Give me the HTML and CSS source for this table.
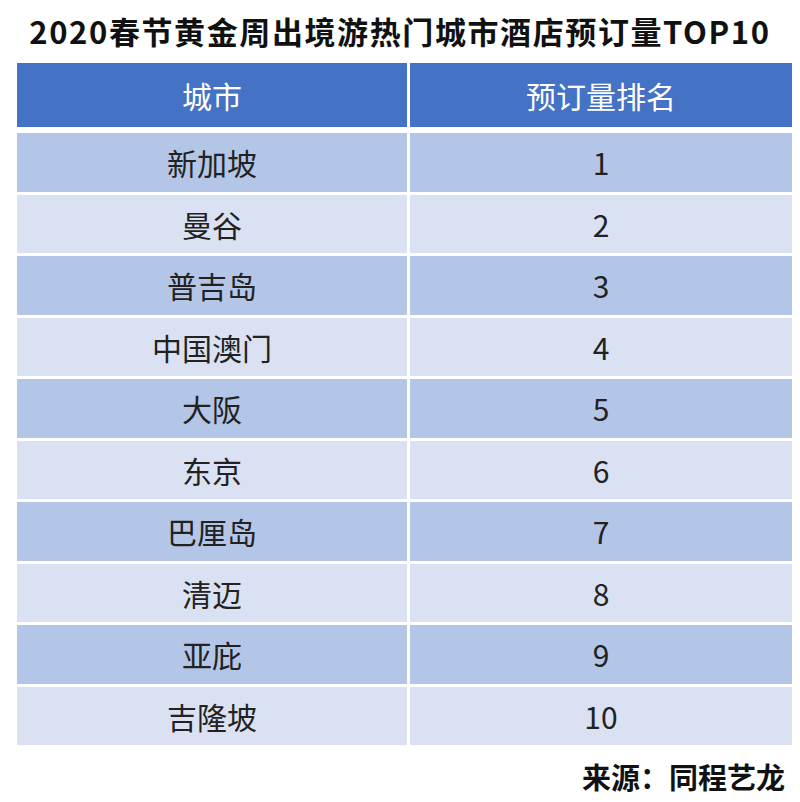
FILE: index.html
```html
<!DOCTYPE html>
<html lang="zh-CN">
<head>
<meta charset="utf-8">
<title>2020春节黄金周出境游热门城市酒店预订量TOP10</title>
<link rel="stylesheet" href="styles.css">
</head>
<body>
<div class="page">
  <h1 class="title">2020春节黄金周出境游热门城市酒店预订量TOP10</h1>
  <div class="table">
    <div class="cell head">城市</div>
    <div class="cell head">预订量排名</div>
    <div class="cell odd">新加坡</div><div class="cell odd">1</div>
    <div class="cell even">曼谷</div><div class="cell even">2</div>
    <div class="cell odd">普吉岛</div><div class="cell odd">3</div>
    <div class="cell even">中国澳门</div><div class="cell even">4</div>
    <div class="cell odd">大阪</div><div class="cell odd">5</div>
    <div class="cell even">东京</div><div class="cell even">6</div>
    <div class="cell odd">巴厘岛</div><div class="cell odd">7</div>
    <div class="cell even">清迈</div><div class="cell even">8</div>
    <div class="cell odd">亚庇</div><div class="cell odd">9</div>
    <div class="cell even">吉隆坡</div><div class="cell even">10</div>
  </div>
  <div class="source">来源：同程艺龙</div>
</div>
</body>
</html>
```
FILE: styles.css
```css
html, body {
  margin: 0;
  padding: 0;
  background: #ffffff;
}
.page {
  width: 800px;
  height: 802px;
  display: flex;
  flex-direction: column;
  font-family: "Noto Sans CJK SC", "Noto Sans", sans-serif;
  color: #222222;
}
.title {
  margin: 0;
  height: 63px;
  display: flex;
  align-items: center;
  justify-content: center;
  font-size: 31px;
  font-weight: 700;
  letter-spacing: 1.6px;
  color: #111111;
  padding-bottom: 2px;
  box-sizing: border-box;
}
.table {
  margin-left: 17px;
  width: 775px;
  display: grid;
  grid-template-columns: 390px 382px;
  grid-template-rows: 67px repeat(10, 58.5px);
  column-gap: 3px;
  row-gap: 3px;
}
.cell {
  display: flex;
  align-items: center;
  justify-content: center;
  font-size: 30px;
  line-height: 1;
}
.head {
  align-self: start;
  height: 64px;
  background: #4472c4;
  color: #ffffff;
}
.odd {
  background: #b4c6e7;
}
.even {
  background: #d9e1f2;
}
.source {
  margin-top: 10px;
  padding-right: 15px;
  text-align: right;
  font-size: 29px;
  font-weight: 700;
  color: #111111;
}
```
